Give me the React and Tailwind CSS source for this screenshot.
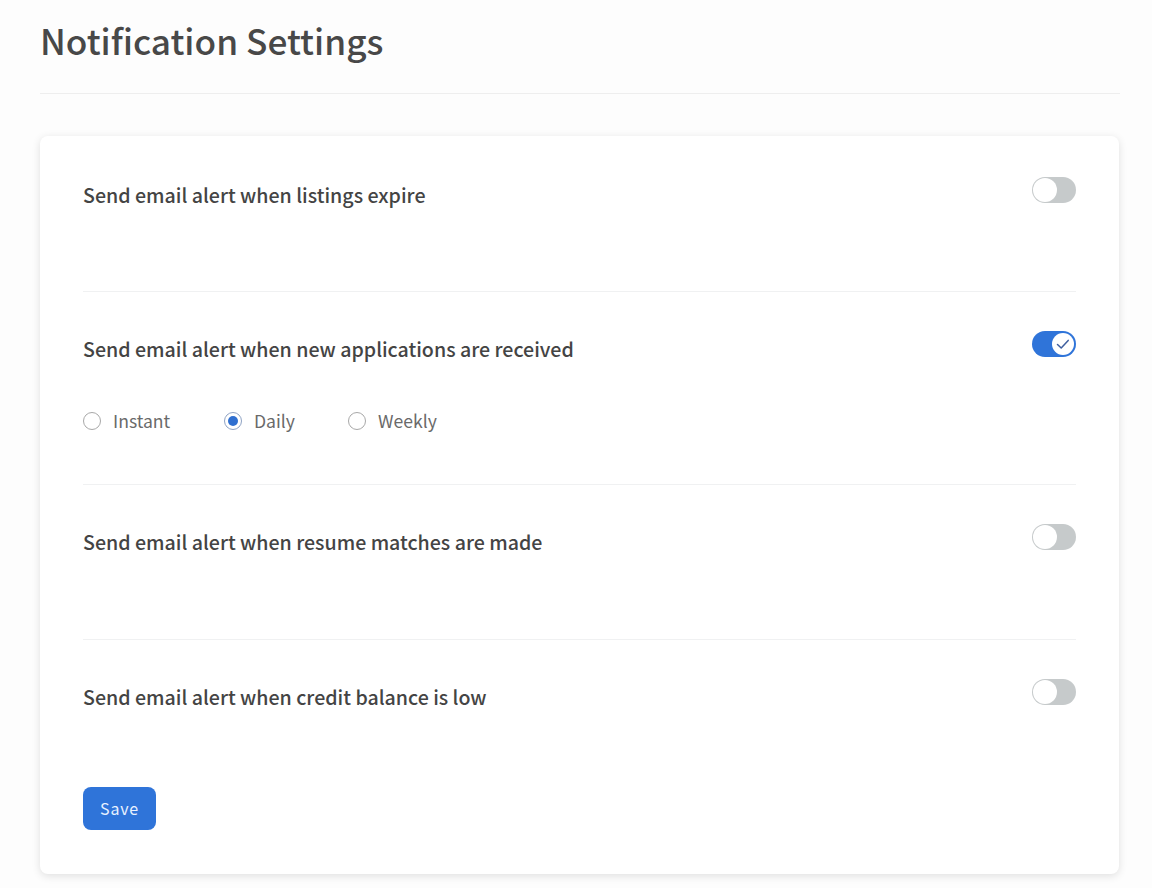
function Toggle({ on }) {
  return on ? (
    <div className="flex h-[26px] w-11 shrink-0 items-center justify-end rounded-full bg-[#2f74d9] p-[2px]">
      <div className="flex h-[22px] w-[22px] items-center justify-center rounded-full bg-white">
        <svg width="16" height="16" viewBox="0 0 16 16" fill="none" stroke="#3f5f9f" strokeWidth="1.5" strokeLinecap="round" strokeLinejoin="round">
          <path d="M2.5 8.5 L6.2 12 L13.2 4.4" />
        </svg>
      </div>
    </div>
  ) : (
    <div className="flex h-[26px] w-11 shrink-0 items-center rounded-full bg-[#c6cacb] p-px">
      <div className="h-6 w-6 rounded-full bg-white" />
    </div>
  );
}

function Radio({ label, checked, className }) {
  return (
    <div className={"flex items-center gap-[12px] " + className}>
      <div className={"flex h-[18px] w-[18px] items-center justify-center rounded-full border bg-white " + (checked ? "border-[#8fa3c4]" : "border-[#a8a8a8]")}>
        {checked && <div className="h-[10px] w-[10px] rounded-full bg-[#2f6fd0]" />}
      </div>
      <span className="text-[17.6px] leading-6 text-[#6a6a6a]">{label}</span>
    </div>
  );
}

function Row({ label, on, children, height, divider, top }) {
  return (
    <div className={(divider ? "border-b border-[#f0f1f2] " : "") + height + " " + top}>
      <div className="flex items-start justify-between">
        <div className="pt-[4px] text-[19.6px] font-medium leading-7 text-[#444444]">{label}</div>
        <Toggle on={on} />
      </div>
      {children}
    </div>
  );
}

export default function App() {
  return (
    <div className="h-[888px] overflow-hidden bg-[#fdfdfd] pl-10 font-['Noto_Sans_CJK_JP','Noto_Sans',sans-serif]">
      <div className="flex h-[94px] w-[1080px] items-start border-b border-[#eeeeee] pt-[13px]">
        <h1 className="text-[35.2px] font-medium leading-[54px] text-[#484848]">Notification Settings</h1>
      </div>
      <div className="mt-[42px] h-[738px] w-[1079px] rounded-lg bg-white px-[43px] shadow-[0_2px_8px_rgba(0,0,0,0.12)]">
        <Row label="Send email alert when listings expire" on={false} height="h-[156px]" top="pt-[41px]" divider />
        <Row label="Send email alert when new applications are received" on height="h-[193px]" top="pt-[39px]" divider>
          <div className="mt-[46px] flex items-center">
            <Radio label="Instant" className="w-[141px]" />
            <Radio label="Daily" checked className="w-[124px]" />
            <Radio label="Weekly" />
          </div>
        </Row>
        <Row label="Send email alert when resume matches are made" on={false} height="h-[155px]" top="pt-[39px]" divider />
        <Row label="Send email alert when credit balance is low" on={false} height="h-[147px]" top="pt-[39px]" />
        <button className="h-[43px] w-[73px] rounded-lg bg-[#2f74d9] pb-[2px] text-[16px] tracking-[0.8px] text-[#e8f1ff]">Save</button>
      </div>
    </div>
  );
}
